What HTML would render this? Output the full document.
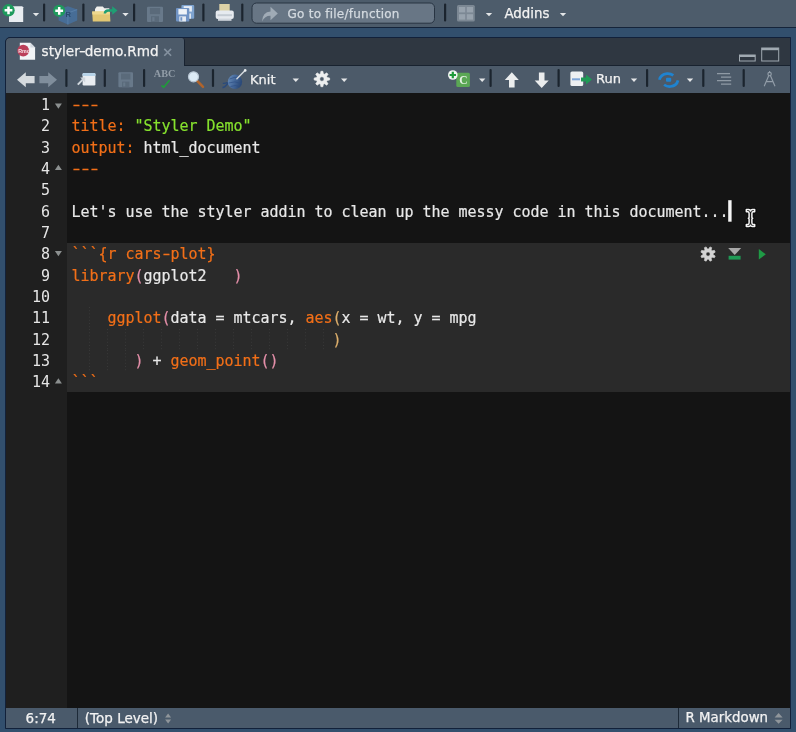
<!DOCTYPE html>
<html><head><meta charset="utf-8"><title>styler-demo.Rmd</title>
<style>
html,body{margin:0;padding:0;}
body{width:796px;height:732px;overflow:hidden;background:#324f6d;position:relative;font-family:"DejaVu Sans","Liberation Sans",sans-serif;color:#fff;}
.abs{position:absolute;}
#top{left:0;top:0;width:796px;height:27px;background:#4d5c6b;border-bottom:1px solid #15243a;}
#panel{will-change:transform;left:5px;top:37px;width:784px;height:690px;border:1px solid #12213a;border-radius:5px 0 0 0;background:#141414;overflow:hidden;}
#tabbar{left:0;top:0;width:784px;height:27px;background:#2f3741;border-bottom:1px solid #18222f;}
#tab{left:0;top:0;width:178px;height:28px;background:#4c5a69;border-right:1px solid #182230;border-radius:4px 3px 0 0;}
#tb2{left:0;top:28px;width:784px;height:27px;background:#4c5a69;}
#gutter{left:0;top:55px;width:61px;height:615px;background:#1f1f1f;}
#chunk{left:61px;top:205px;width:723px;height:149px;background:#2a2a2a;}
#status{left:0;top:670px;width:784px;height:20px;background:#4a5a6b;font-size:13px;}
.ui{font-size:14px;color:#f2f2f2;white-space:pre;-webkit-text-stroke:0.25px;}
.ln,.cl{font-family:"DejaVu Sans Mono","Liberation Mono",monospace;font-size:15px;line-height:21px;height:21px;white-space:pre;letter-spacing:-0.031px;}
.ln{left:0;width:44px;text-align:right;color:#e6e6e6;}
.cl{left:65.5px;color:#e8e8e8;-webkit-text-stroke:0.2px;}
.h{display:inline-block;width:9.03px;text-align:center;letter-spacing:0;transform:scale(1.48,1.08);transform-origin:50% 52%;}
.o{color:#f26f18}.g{color:#86e22e}.p{color:#e48fa9}.y{color:#dcae6c}
</style></head><body>
<div id="top" class="abs"></div>
<div id="panel" class="abs">
 <div id="tabbar" class="abs"></div>
 <div id="tab" class="abs"></div>
 <div id="tb2" class="abs"></div>
 <div id="gutter" class="abs"></div>
 <div id="chunk" class="abs"></div>
 <div id="code">
<div class="abs ln" style="top:57px">1</div>
<div class="abs cl" style="top:57px"><span class="o"><span class="h">-</span><span class="h">-</span><span class="h">-</span></span></div>
<div class="abs ln" style="top:78px">2</div>
<div class="abs cl" style="top:78px"><span class="o">title:</span> <span class="g">"Styler Demo"</span></div>
<div class="abs ln" style="top:100px">3</div>
<div class="abs cl" style="top:100px"><span class="o">output:</span> html_document</div>
<div class="abs ln" style="top:121px">4</div>
<div class="abs cl" style="top:121px"><span class="o"><span class="h">-</span><span class="h">-</span><span class="h">-</span></span></div>
<div class="abs ln" style="top:142px">5</div>
<div class="abs ln" style="top:164px">6</div>
<div class="abs cl" style="top:164px">Let's use the styler addin to clean up the messy code in this document...</div>
<div class="abs ln" style="top:185px">7</div>
<div class="abs ln" style="top:206px">8</div>
<div class="abs cl" style="top:206px"><span class="o">```{r cars<span class="h">-</span>plot}</span></div>
<div class="abs ln" style="top:228px">9</div>
<div class="abs cl" style="top:228px"><span class="o">library</span><span class="p">(</span>ggplot2   <span class="p">)</span></div>
<div class="abs ln" style="top:249px">10</div>
<div class="abs ln" style="top:270px">11</div>
<div class="abs cl" style="top:270px">    <span class="o">ggplot</span><span class="p">(</span>data = mtcars, <span class="o">aes</span><span class="y">(</span>x = wt, y = mpg</div>
<div class="abs ln" style="top:292px">12</div>
<div class="abs cl" style="top:292px">                             <span class="y">)</span></div>
<div class="abs ln" style="top:313px">13</div>
<div class="abs cl" style="top:313px">       <span class="p">)</span> + <span class="o">geom_point</span><span class="p">()</span></div>
<div class="abs ln" style="top:334px">14</div>
<div class="abs cl" style="top:334px"><span class="o">```</span></div>
</div>
 <div id="status" class="abs"></div>
</div>
<svg class="abs" id="icons" style="left:0;top:0" width="796" height="732" viewBox="0 0 796 732">
<rect x="43" y="3.5" width="2.2" height="18.0" rx="1.1" fill="#1b242e"/>
<rect x="82.3" y="3.5" width="2.2" height="18.0" rx="1.1" fill="#1b242e"/>
<rect x="133" y="3.5" width="2.2" height="18.0" rx="1.1" fill="#1b242e"/>
<rect x="202.3" y="3.5" width="2.2" height="18.0" rx="1.1" fill="#1b242e"/>
<rect x="241.2" y="3.5" width="2.2" height="18.0" rx="1.1" fill="#1b242e"/>
<rect x="444" y="3.5" width="2.2" height="18.0" rx="1.1" fill="#1b242e"/>
<path d="M32.8,12.9 h6.4 l-3.2,3.3 z" fill="#e4e6e8"/>
<path d="M122.3,12.9 h6.4 l-3.2,3.3 z" fill="#e4e6e8"/>
<path d="M485.8,12.9 h6.4 l-3.2,3.3 z" fill="#e4e6e8"/>
<path d="M559.8,12.9 h6.4 l-3.2,3.3 z" fill="#e4e6e8"/>
<g id="i-newfile"><path d="M9,6.2 h13.2 l1,1 v14.8 h-14.2 z" fill="#e9edf1"/><circle cx="8.5" cy="10.3" r="6.2" fill="#1e9a5c"/><path d="M8.5,6.4 v7.8 M4.6,10.3 h7.8" stroke="#fff" stroke-width="2.5"/></g>
<g id="i-newproj"><path d="M58.6,9.6 l9.3,-3.4 l9.3,3.4 v11 l-9.3,4 l-9.3,-4 z" fill="#476f9a" opacity="0.92"/><path d="M58.6,9.6 l9.3,3.4 l9.3,-3.4 M67.9,13 v11.6" stroke="#5f86ae" stroke-width="0.9" fill="none" opacity="0.8"/><text x="65.4" y="16.6" font-family="Liberation Sans,sans-serif" font-weight="bold" font-size="7.6" fill="#294a6e">R</text><circle cx="59.2" cy="10.8" r="6.1" fill="#1e9a5c"/><path d="M59.2,6.9 v7.8 M55.3,10.8 h7.8" stroke="#fff" stroke-width="2.5"/></g>
<g id="i-open"><path d="M95,9 l1.8,-2.4 h6 l1.5,1.7 h5 v6 h-14.3 z" fill="#f1f1ee"/><path d="M92.2,11.6 h17.6 l0.6,10 h-17.6 z" fill="#e2c773"/><path d="M92.2,11.6 h17.6 l0.2,3 h-17.7 z" fill="#efd98f"/><path d="M103.6,13.4 q0.6,-4.2 4.6,-4.2 h4 v-2.9 l5.3,4.2 l-5.3,4.2 v-2.9 h-4 q-1.8,0 -2.2,1.6 z" fill="#1f9f74"/></g>
<g id="i-save0"><rect x="147" y="6.8" width="16" height="15.2" rx="1" fill="#68798a"/><rect x="149.88" y="8.02" width="10.24" height="6.08" fill="#5a6a7a"/><rect x="151.00" y="16.22" width="8.00" height="5.78" fill="#5a6a7a"/><rect x="152.28" y="17.14" width="2.24" height="3.95" fill="#68798a"/></g>
<g id="i-saveall"><rect x="181.4" y="5" width="12.8" height="13.7" rx="1" fill="#7ea3cf"/><rect x="183.70" y="6.10" width="8.19" height="5.48" fill="#e6edf5"/><rect x="184.60" y="13.49" width="6.40" height="5.21" fill="#dfe6ee"/><rect x="185.62" y="14.32" width="1.79" height="3.56" fill="#7ea3cf"/><rect x="176" y="8" width="13.3" height="13.5" rx="1" fill="#7093c4"/><rect x="178.39" y="9.08" width="8.51" height="5.40" fill="#eef2f7"/><rect x="179.32" y="16.37" width="6.65" height="5.13" fill="#e6ebf2"/><rect x="180.39" y="17.18" width="1.86" height="3.51" fill="#7093c4"/></g>
<g id="i-print"><rect x="219.3" y="4" width="10.4" height="8" fill="#ddd2a6"/><rect x="215.7" y="10.6" width="18.1" height="8.4" rx="2" fill="#e6eaef"/><rect x="217.5" y="14.2" width="14.5" height="2" fill="#c5ccd4"/><rect x="218" y="18.6" width="13.5" height="2.2" fill="#cfd5dc"/></g>
<rect x="252" y="3" width="182.5" height="20.2" rx="4.5" fill="#687685" stroke="#283442" stroke-width="1"/>
<path id="i-goto" d="M262,21.5 q0.5,-9.5 8.5,-10 v-4.8 l7.3,6.8 l-7.3,6.8 v-4.6 q-5.5,-0.2 -8.5,5.8 z" fill="#a0abb6"/>
<g id="i-grid"><rect x="457" y="5" width="17.8" height="16.6" rx="1.5" fill="#7c8894"/><rect x="459" y="7" width="6.2" height="5.4" fill="#97a2ad"/><rect x="466.8" y="7" width="6.2" height="5.4" fill="#97a2ad"/><rect x="459" y="14.2" width="6.2" height="5.4" fill="#97a2ad"/><rect x="466.8" y="14.2" width="6.2" height="5.4" fill="#97a2ad"/></g>
<!-- tab + editor toolbar -->
<g id="i-rmd"><path d="M19.8,42.8 h10.6 l4.7,4.7 v12.3 h-15.3 z" fill="#f1f4f7"/><path d="M30.4,42.8 v4.7 h4.7 z" fill="#d3dae1"/><circle cx="23.2" cy="50.6" r="5.9" fill="#bb3f5a"/><text x="18.3" y="52.5" font-family="Liberation Sans,sans-serif" font-weight="bold" font-size="5.3" fill="#f6e4e8">Rmd</text></g>
<path d="M164.3,48.9 l6.8,6.8 M171.1,48.9 l-6.8,6.8" stroke="#84919f" stroke-width="1.6" fill="none"/>
<g id="i-minmax" fill="none" stroke="#a0a9b1" stroke-width="1"><rect x="739.5" y="55" width="15.7" height="6"/><rect x="761.7" y="48" width="17" height="13"/></g><rect x="739.5" y="55" width="15.7" height="2" fill="#a0a9b1"/><rect x="761.7" y="48" width="17" height="2.2" fill="#a0a9b1"/>
<rect x="65.3" y="69" width="2.2" height="18" rx="1.1" fill="#1b242e"/>
<rect x="103.7" y="69" width="2.2" height="18" rx="1.1" fill="#1b242e"/>
<rect x="143" y="69" width="2.2" height="18" rx="1.1" fill="#1b242e"/>
<rect x="211.9" y="69" width="2.2" height="18" rx="1.1" fill="#1b242e"/>
<rect x="489.5" y="69" width="2.2" height="18" rx="1.1" fill="#1b242e"/>
<rect x="557.5" y="69" width="2.2" height="18" rx="1.1" fill="#1b242e"/>
<rect x="646" y="69" width="2.2" height="18" rx="1.1" fill="#1b242e"/>
<rect x="702.2" y="69" width="2.2" height="18" rx="1.1" fill="#1b242e"/>
<rect x="742.6" y="69" width="2.2" height="18" rx="1.1" fill="#1b242e"/>
<path d="M292.6,78.6 h6.4 l-3.2,3.3 z" fill="#e4e6e8"/>
<path d="M341.0,78.6 h6.4 l-3.2,3.3 z" fill="#e4e6e8"/>
<path d="M479.0,78.6 h6.4 l-3.2,3.3 z" fill="#e4e6e8"/>
<path d="M630.8,78.6 h6.4 l-3.2,3.3 z" fill="#e4e6e8"/>
<path d="M686.8,78.6 h6.4 l-3.2,3.3 z" fill="#e4e6e8"/>
<path id="i-back" d="M17,79.7 l8.8,-7.5 v3.9 h8.8 v7.2 h-8.8 v3.9 z" fill="#d5dade"/>
<path id="i-fwd" d="M57,79.7 l-8.8,-7.5 v3.9 h-8.8 v7.2 h8.8 v3.9 z" fill="#808e9c"/>
<g id="i-popout"><rect x="82.6" y="73" width="12.8" height="12.4" rx="1.2" fill="#e9edf1"/><path d="M82.6,76 v-1.8 q0,-1.2 1.2,-1.2 h10.4 q1.2,0 1.2,1.2 v1.8 z" fill="#b7d3e8"/><path d="M77.8,84.6 l5.2,-5.2" stroke="#cfd6dc" stroke-width="2"/><path d="M80.2,77.6 h5 v5 z" fill="#cfd6dc"/></g>
<g id="i-save1"><rect x="118.4" y="72.3" width="14.6" height="15" rx="1" fill="#68798a"/><rect x="121.03" y="73.50" width="9.34" height="6.00" fill="#5a6a7a"/><rect x="122.05" y="81.60" width="7.30" height="5.70" fill="#5a6a7a"/><rect x="123.22" y="82.50" width="2.04" height="3.90" fill="#68798a"/></g>
<text x="153.8" y="77" font-family="Liberation Serif,serif" font-weight="bold" font-size="9.8" fill="#929da8" textLength="21.5" lengthAdjust="spacingAndGlyphs">ABC</text>
<path d="M161.5,85.3 l2.2,2 l5.8,-7" stroke="#1f9c3a" stroke-width="1.6" fill="none"/>
<g id="i-mag"><path d="M197,80.6 l6,6.2" stroke="#b0642c" stroke-width="2.6" stroke-linecap="round"/><circle cx="193.5" cy="76.8" r="5" fill="#dcebf6" stroke="#b9c7d4" stroke-width="1.2"/></g>
<g id="i-knit"><defs><linearGradient id="kg" x1="0" y1="0" x2="1" y2="0.3"><stop offset="0" stop-color="#6a8fbc"/><stop offset="0.55" stop-color="#45689a"/><stop offset="1" stop-color="#2c4a78"/></linearGradient></defs><path d="M222.5,87.6 q2.5,-0.5 3.6,-2.2 q1.2,-1.8 3,-2.4" stroke="#2a4a7c" stroke-width="1.6" fill="none"/><path d="M222.8,83.4 q2.5,0.2 5,-1" stroke="#2a4a7c" stroke-width="1.2" fill="none"/><circle cx="235" cy="81.8" r="7.2" fill="url(#kg)"/><path d="M229.5,79 q5,-3 10.5,-0.5 M228.6,83 q6,-2.5 13,0.6 M230.5,86.5 q4.5,-2 9.5,0.2" stroke="#2b4d82" stroke-width="0.9" fill="none" opacity="0.7"/><path d="M236.9,78.8 l8.1,-8.4" stroke="#d2d7dc" stroke-width="1.45" stroke-linecap="round"/><circle cx="245.2" cy="70.4" r="1.3" fill="#eceff1"/></g>
<path id="i-gear" fill-rule="evenodd" fill="#eceeef" stroke="#eceeef" stroke-width="0.6" stroke-linejoin="round" d="M329.63,77.99 L329.63,80.01 L327.20,80.47 L326.69,81.71 L328.08,83.75 L326.65,85.18 L324.61,83.79 L323.37,84.30 L322.91,86.73 L320.89,86.73 L320.43,84.30 L319.19,83.79 L317.15,85.18 L315.72,83.75 L317.11,81.71 L316.60,80.47 L314.17,80.01 L314.17,77.99 L316.60,77.53 L317.11,76.29 L315.72,74.25 L317.15,72.82 L319.19,74.21 L320.43,73.70 L320.89,71.27 L322.91,71.27 L323.37,73.70 L324.61,74.21 L326.65,72.82 L328.08,74.25 L326.69,76.29 L327.20,77.53 z M324.09999999999997,79 a2.2,2.2 0 1,0 -4.4,0 a2.2,2.2 0 1,0 4.4,0 z"/>
<g id="i-insert"><rect x="456.3" y="72.7" width="13.6" height="14.2" rx="1.5" fill="#5ba755"/><text x="459.2" y="84.3" font-family="Liberation Serif,serif" font-weight="bold" font-size="11.5" fill="#e6f2e4">C</text><circle cx="452.8" cy="75" r="4.8" fill="#f2f5f3"/><path d="M452.8,71.8 v6.4 M449.6,75 h6.4" stroke="#1f9a3a" stroke-width="2.2"/></g>
<path id="i-up" d="M511.8,72.3 l7,7.6 h-4.2 v7.5 h-5.6 v-7.5 h-4.2 z" fill="#ebedee"/>
<path id="i-down" d="M541.7,88 l7,-7.6 h-4.2 v-8 h-5.6 v8 h-4.2 z" fill="#ebedee"/>
<g id="i-run"><rect x="570.4" y="71.5" width="12.8" height="14.5" rx="1.6" fill="#eef0f2"/><rect x="572" y="78.3" width="8" height="2" fill="#7fa6d8"/><path d="M581,77.6 h5 v-3 l6,5 l-6,5 v-3 h-5 z" fill="#1f9a55"/></g>
<g id="i-sync" fill="none" stroke="#1f83d0" stroke-width="2.7"><path d="M659.4,79.8 Q660.6,74.4 667,73.6 Q670.6,73.3 673.3,75.4"/><path d="M678,80.4 Q676.8,85.8 670.4,86.5 Q666.8,86.8 664.1,84.7"/></g><rect x="666" y="77.8" width="5.2" height="4" rx="1" fill="#1f83d0"/>
<g id="i-outline" stroke="#8f9aa5" stroke-width="1.1"><path d="M717,73.6 h13 M721,77.1 h10.2 M717,80.6 h14.2 M721,84.1 h10.2"/></g>
<g id="i-compass" stroke="#929da8" stroke-width="1.15" fill="none"><circle cx="769.6" cy="74" r="1.7"/><path d="M769.6,71 v1.3 M768.8,75.6 l-4.6,10.6 M770.4,75.6 l4.6,10.6 M766.2,81.6 h6.8"/></g>
<!-- editor extras -->
<g id="guides" stroke="#383838" stroke-width="1" stroke-dasharray="1 2.2">
<path d="M89.5,307 V328.3"/>
<path d="M89.5,329 V350.3"/>
<path d="M107.5,329 V350.3"/>
<path d="M125.5,329 V350.3"/>
<path d="M143.5,329 V350.3"/>
<path d="M161.5,329 V350.3"/>
<path d="M179.5,329 V350.3"/>
<path d="M197.5,329 V350.3"/>
<path d="M215.5,329 V350.3"/>
<path d="M233.5,329 V350.3"/>
<path d="M251.5,329 V350.3"/>
<path d="M269.5,329 V350.3"/>
<path d="M287.5,329 V350.3"/>
<path d="M305.5,329 V350.3"/>
<path d="M323.5,329 V350.3"/>
<path d="M89.5,350 V371.3"/>
<path d="M107.5,350 V371.3"/>
<path d="M125.5,350 V371.3"/>
</g>
<path d="M54.9,103.45 h7 l-3.5,5.2 z" fill="#8c9090"/>
<path d="M54.9,251.00 h7 l-3.5,5.2 z" fill="#8c9090"/>
<path d="M54.9,169.95 h7 l-3.5,-5.2 z" fill="#8c9090"/>
<path d="M54.9,383.55 h7 l-3.5,-5.2 z" fill="#8c9090"/>
<rect x="728.2" y="200.2" width="3.4" height="21.5" fill="#f4f4f4"/>
<g id="i-ibeam"><path d="M746.3,209.6 H748.8 Q750,209.8 750.5,211 Q751,209.8 752.2,209.6 H754.7 V211.7 H753 Q752,212 751.9,213.5 V217.4 L752.7,218.2 L751.9,219 V222.8 Q752,224.3 753,224.5 H754.7 V226.6 H752.2 Q751,226.4 750.5,225.2 Q750,226.4 748.8,226.6 H746.3 V224.5 H748 Q749,224.3 749.1,222.8 V219 L748.3,218.2 L749.1,217.4 V213.5 Q749,212 748,211.7 H746.3 Z" fill="none" stroke="#050505" stroke-width="3.4" stroke-linejoin="round"/><path d="M746.3,209.6 H748.8 Q750,209.8 750.5,211 Q751,209.8 752.2,209.6 H754.7 V211.7 H753 Q752,212 751.9,213.5 V217.4 L752.7,218.2 L751.9,219 V222.8 Q752,224.3 753,224.5 H754.7 V226.6 H752.2 Q751,226.4 750.5,225.2 Q750,226.4 748.8,226.6 H746.3 V224.5 H748 Q749,224.3 749.1,222.8 V219 L748.3,218.2 L749.1,217.4 V213.5 Q749,212 748,211.7 H746.3 Z" fill="#1a1a1a" stroke="#f6f6f6" stroke-width="1.5" stroke-linejoin="round"/></g>
<path id="i-gear2" fill-rule="evenodd" fill="#d4d4d4" stroke="#d4d4d4" stroke-width="0.6" stroke-linejoin="round" d="M715.20,255.97 L714.46,257.74 L712.15,257.25 L711.25,258.15 L711.74,260.46 L709.97,261.20 L708.69,259.21 L707.41,259.21 L706.13,261.20 L704.36,260.46 L704.85,258.15 L703.95,257.25 L701.64,257.74 L700.90,255.97 L702.89,254.69 L702.89,253.41 L700.90,252.13 L701.64,250.36 L703.95,250.85 L704.85,249.95 L704.36,247.64 L706.13,246.90 L707.41,248.89 L708.69,248.89 L709.97,246.90 L711.74,247.64 L711.25,249.95 L712.15,250.85 L714.46,250.36 L715.20,252.13 L713.21,253.41 L713.21,254.69 z M710.15,254.05 a2.1,2.1 0 1,0 -4.2,0 a2.1,2.1 0 1,0 4.2,0 z"/>
<path d="M728.2,248 h13 l-6.5,7.1 z" fill="#a9a9a9"/><rect x="728.6" y="255.8" width="12" height="3.8" fill="#1f9a55"/>
<path d="M758.8,249 l7,5.3 l-7,5.3 z" fill="#1f9a45"/>
<rect x="77" y="708" width="1" height="20" fill="#1d2a38"/><rect x="678" y="708" width="1" height="20" fill="#1d2a38"/>
<path d="M165.1,717.4 h6 l-3,-4 z M165.1,719.5 h6 l-3,4 z" fill="#8f959a"/>
<path d="M774.6,717.6 h8 l-4,-4.6 z M774.6,719.8 h8 l-4,4 z" fill="#90969b"/>
</svg>
<div id="texts" style="will-change:transform">
<div class="abs ui" id="t-goto" style="left:287.6px;top:6.6px;font-size:12px;letter-spacing:0.23px;color:#d4dae0">Go to file/function</div>
<div class="abs ui" id="t-addins" style="left:504.4px;top:6.1px;font-size:13.4px">Addins</div>
<div class="abs ui" id="t-tab" style="left:41.6px;top:43.3px;font-size:13.6px">styler<span style="display:inline-block;transform:scaleX(1.4)">-</span>demo.Rmd</div>
<div class="abs ui" id="t-knit" style="left:250px;top:71.6px;font-size:13px">Knit</div>
<div class="abs ui" id="t-run" style="left:596px;top:71px;font-size:13px">Run</div>
<div class="abs ui" id="t-pos" style="left:25.6px;top:709.6px;font-size:13.5px">6:74</div>
<div class="abs ui" id="t-scope" style="left:84.8px;top:709.6px;font-size:13.5px">(Top Level)</div>
<div class="abs ui" id="t-mode" style="left:685.6px;top:710.2px;font-size:13.35px">R Markdown</div>
</div>
</body></html>
